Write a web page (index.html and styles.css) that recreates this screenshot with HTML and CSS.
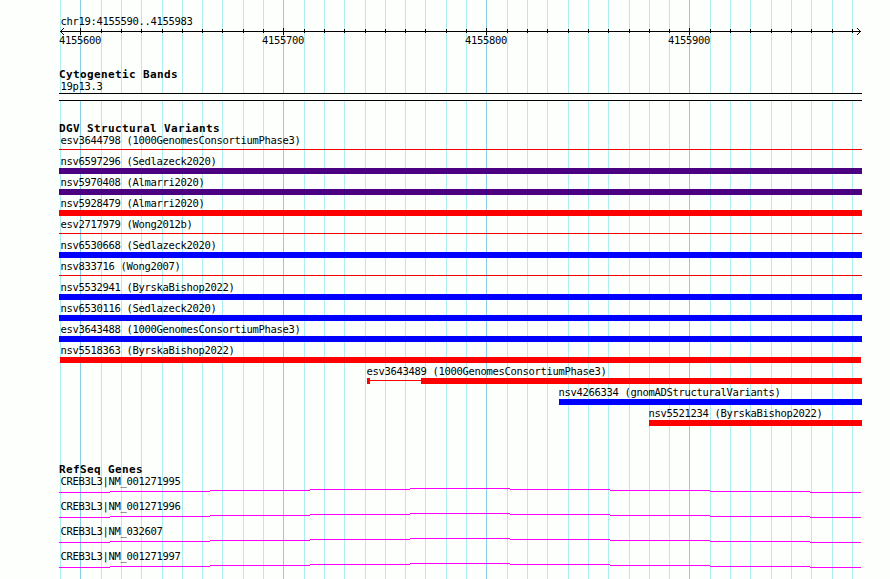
FILE: index.html
```
<!DOCTYPE html>
<html lang="en">
<head>
<meta charset="utf-8">
<title>chr19:4155590..4155983</title>
<link rel="stylesheet" href="styles.css">
</head>
<body>
<svg class="grid" width="890" height="579" aria-hidden="true"><path id="minor" class="minor"/><path id="major" class="major"/></svg>
<main class="browser">
  <section class="ruler">
    <p class="label">chr19:4155590..4155983</p>
    <svg class="axis" width="803" height="9" aria-hidden="true"><path id="ticks"/><path id="major-ticks"/><path d="M1 4h801v1h-801zM2 3h1v3h-1zM3 2h1v1h-1zM3 6h1v1h-1zM4 1h1v1h-1zM4 7h1v1h-1zM800 3h1v3h-1zM799 2h1v1h-1zM799 6h1v1h-1zM798 1h1v1h-1zM798 7h1v1h-1z"/></svg>
    <div class="numbers"><span>4155600</span><span>4155700</span><span>4155800</span><span>4155900</span></div>
  </section>
  <section class="bands">
    <h2>Cytogenetic Bands</h2>
    <p class="label">19p13.3</p>
    <div class="band"></div>
  </section>
  <section class="variants">
    <h2>DGV Structural Variants</h2>
    <div class="row"><p class="label">esv3644798 (1000GenomesConsortiumPhase3)</p><div class="bar thin"></div></div>
    <div class="row"><p class="label">nsv6597296 (Sedlazeck2020)</p><div class="bar indigo"></div></div>
    <div class="row"><p class="label">nsv5970408 (Almarri2020)</p><div class="bar indigo"></div></div>
    <div class="row"><p class="label">nsv5928479 (Almarri2020)</p><div class="bar red"></div></div>
    <div class="row"><p class="label">esv2717979 (Wong2012b)</p><div class="bar thin"></div></div>
    <div class="row"><p class="label">nsv6530668 (Sedlazeck2020)</p><div class="bar blue"></div></div>
    <div class="row"><p class="label">nsv833716 (Wong2007)</p><div class="bar thin"></div></div>
    <div class="row"><p class="label">nsv5532941 (ByrskaBishop2022)</p><div class="bar blue"></div></div>
    <div class="row"><p class="label">nsv6530116 (Sedlazeck2020)</p><div class="bar blue"></div></div>
    <div class="row"><p class="label">esv3643488 (1000GenomesConsortiumPhase3)</p><div class="bar blue"></div></div>
    <div class="row"><p class="label">nsv5518363 (ByrskaBishop2022)</p><div class="bar red inset"></div></div>
    <div class="row from-741"><p class="label">esv3643489 (1000GenomesConsortiumPhase3)</p><div class="bar split"><i class="start"></i><i class="link"></i><i class="rest"></i></div></div>
    <div class="row from-836"><p class="label">nsv4266334 (gnomADStructuralVariants)</p><div class="bar blue"></div></div>
    <div class="row from-880"><p class="label">nsv5521234 (ByrskaBishop2022)</p><div class="bar red"></div></div>
  </section>
  <section class="genes">
    <h2>RefSeq Genes</h2>
    <div class="gene"><p class="label">CREB3L3|NM_001271995</p><svg width="803" height="5"><path class="intron"/></svg></div>
    <div class="gene"><p class="label">CREB3L3|NM_001271996</p><svg width="803" height="5"><path class="intron"/></svg></div>
    <div class="gene"><p class="label">CREB3L3|NM_032607</p><svg width="803" height="5"><path class="intron"/></svg></div>
    <div class="gene"><p class="label">CREB3L3|NM_001271997</p><svg width="803" height="5"><path class="intron"/></svg></div>
  </section>
</main>
<script src="grid.js"></script>
</body>
</html>
```
FILE: styles.css
```
* { box-sizing: border-box; }
body { margin: 0; width: 890px; height: 579px; overflow: hidden; background: #fdfffc; color: #000; font-family: "DejaVu Sans Mono", monospace; }
svg { display: block; shape-rendering: crispEdges; }
.grid { position: absolute; top: 0; left: 0; }
.minor { fill: #afeeee; }
.major { fill: #87ceeb; }
.browser { position: relative; width: 803px; margin-left: 59px; padding-top: 15px; }
.label { margin: 0; padding-left: 1.5px; height: 12px; font-size: 10.5px; line-height: 12px; letter-spacing: -0.321px; white-space: pre; }
h2 { margin: 0; height: 11px; font-size: 11px; line-height: 12px; letter-spacing: 0.378px; font-weight: bold; }
.ruler { height: 54px; }
.numbers { display: flex; gap: 161px; font-size: 10.5px; line-height: 8px; letter-spacing: -0.321px; }
.numbers span { width: 42px; }
.bands { height: 54px; }
.band { height: 8px; margin-top: 1px; border: solid #000; border-width: 1px 0; background: #fdfffc; }
.variants { height: 341px; }
.row { height: 21px; }
.bar { height: 6px; margin-top: 1px; }
.thin { height: 1px; margin-top: 3px; background: #f00000; }
.red { background: #f00; }
.blue { background: #00f; }
.indigo { background: #4b0082; }
.inset { margin-left: 1px; margin-right: 1px; }
.from-741 { margin-left: 306px; }
.from-836 { margin-left: 498px; }
.from-880 { margin-left: 588px; }
.from-741 .bar { margin-left: 2px; }
.from-836 .bar, .from-880 .bar { margin-left: 2px; }
.split { display: flex; }
.start { width: 3px; background: #f00; }
.link { width: 51px; height: 1px; margin-top: 2px; background: #f00; }
.rest { flex: 1; background: #f00; }
.gene { height: 25px; }
.gene svg { margin-top: 1px; }
.intron { fill: #f0f; }
```
FILE: grid.js
```
const xs = [60,80,101,121,141,162,182,202,222,243,263,283,304,324,344,365,385,405,425,446,466,486,507,527,547,568,588,608,629,649,669,689,710,730,750,771,791,811,832,852];
const isMajor = (x, i) => i % 10 === 1;
const isMinor = (x, i) => i % 10 !== 1;
const draw = (id, keep, y, h, dx) => document.getElementById(id).setAttribute('d',
  xs.filter(keep).map(x => `M${x - dx} ${y}h1v${h}h-1z`).join(''));
draw('minor', isMinor, 0, 579, 0);
draw('major', isMajor, 0, 579, 0);
draw('ticks', (x, i) => i > 0 && isMinor(x, i), 2, 4, 59);
draw('major-ticks', isMajor, 1, 7, 59);

// Introns rise one pixel per segment towards the middle of the panel.
const stops = [0, 51, 151, 251, 351, 451, 551, 651, 751, 802];
const levels = [4, 3, 2, 1, 0, 1, 2, 3, 4];
const intron = levels.map((y, i) => `M${stops[i]} ${y}H${stops[i + 1]}v1H${stops[i]}z`).join('');
document.querySelectorAll('.intron').forEach(p => p.setAttribute('d', intron));
```
